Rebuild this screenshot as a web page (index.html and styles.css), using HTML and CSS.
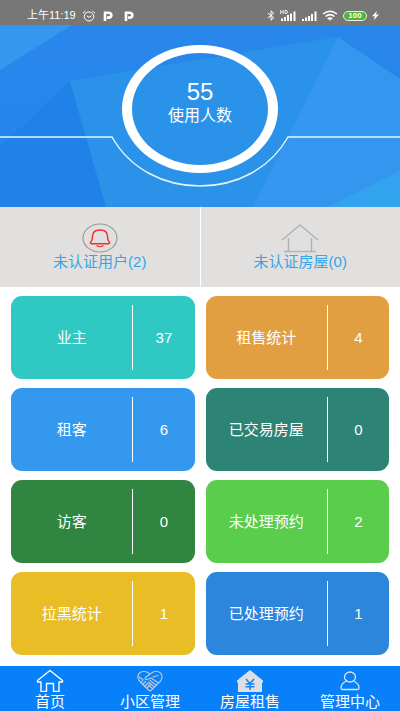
FILE: index.html
```html
<!DOCTYPE html>
<html lang="zh-CN">
<head>
<meta charset="utf-8">
<meta name="viewport" content="width=device-width, initial-scale=1">
<title>小区管理</title>
<link rel="stylesheet" href="styles.css">
</head>
<body>
<header class="status">
  <div class="status-group">
    <span class="time">上午11:19</span>
    <svg class="alarm" width="14" height="12" viewBox="0 0 14 12" fill="none" stroke="#fff"><ellipse cx="7" cy="6.5" rx="4.8" ry="4.5"/><path d="M1 3.2 3.5 1M13 3.2 10.5 1M4.8 5.8 7 7.4l2.6-1.6"/></svg>
    <svg class="p-icon" width="10" height="10" viewBox="0 0 10 10" fill="none" stroke="#fff" stroke-width="2.6"><path d="M2 10V1.800H5.500Q8.400 1.800 8.400 4.200 8.400 6.600 5.500 6.600H4"/></svg>
    <svg class="p-icon" width="10" height="10" viewBox="0 0 10 10" fill="none" stroke="#fff" stroke-width="2.6"><path d="M2 10V1.800H5.500Q8.400 1.800 8.400 4.200 8.400 6.600 5.500 6.600H4"/></svg>
  </div>
  <div class="status-group status-right">
    <svg width="8" height="11" viewBox="0 0 8 11" fill="none" stroke="#fff"><path d="M.8 3 6.8 7.8 4 10.2V.8L6.8 3.2.8 8"/></svg>
    <svg width="16" height="11" viewBox="0 0 16 11" fill="none" stroke="#fff"><path d="M.7 0v4M3.2 0v4M.7 2h2.5M5 .5v3M5 .5h1Q7.5.5 7.500 2T6 3.500H5" stroke-width=".8"/><path d="M2 11V8.500M5 11V7M8 11V5M11 11V3.500M14.500 11V1.500" stroke-width="2"/></svg>
    <svg width="16" height="11" viewBox="0 0 16 11" fill="none" stroke="#fff"><path d="M2 11V9M5 11V7.500M8 11V6M11 11V4M14.500 11V1.500" stroke-width="2"/></svg>
    <svg class="wifi" width="16" height="11" viewBox="0 0 16 11" fill="none" stroke="#fff" stroke-width="1.5"><path d="M1 4Q8-1.500 15 4M3.500 6.500Q8 2.800 12.500 6.500M5.700 8.800Q8 7 10.300 8.800"/><path d="m6.500 9.300 1.500 1.500 1.500-1.500z" fill="#fff" stroke="none"/></svg>
    <span class="battery">100</span>
    <svg width="7" height="9" viewBox="0 0 7 9" fill="#fff"><path d="M4.800 0 0 5.200h2.800L1.800 9 7 3.600H4z"/></svg>
  </div>
</header>

<section class="hero">
  <svg class="hero-art" viewBox="0 0 400 182" preserveAspectRatio="none">
    <defs>
      <linearGradient id="base" x2="0" y2="1"><stop offset="0" stop-color="#2987ec"/><stop offset="1" stop-color="#2384ea"/></linearGradient>
    </defs>
    <rect width="400" height="182" fill="url(#base)"/>
    <path d="M0 0h72L0 45z" fill="#3398ee"/>
    <path d="M70 56 0 122v60h106z" fill="#2082e8"/>
    <path d="M70 56 338 12 253 182H106z" fill="#2b92e9"/>
    <path d="m338 12 62 42v128H253z" fill="#3496ee"/>
    <path d="m328 182 72-36v36z" fill="#32a4ef"/>
    <path d="M0 112H112C130 144 164 161 200 161S270 144 288 112H400" fill="none" stroke="#e2f5fb" stroke-width="1.500"/>
    <path fill="#fff" fill-rule="evenodd" d="M122 84a78 64 0 1 0 156 0a78 64 0 1 0-156 0zM132 84a68 56 0 1 1 136 0a68 56 0 1 1-136 0z"/>
  </svg>
  <div class="hero-text">
    <strong class="hero-count">55</strong>
    <span class="hero-label">使用人数</span>
  </div>
</section>

<section class="pending">
  <a class="pending-item" href="#users">
    <svg width="36" height="30" viewBox="0 0 36 30" fill="none"><ellipse cx="18" cy="15" rx="17" ry="14" stroke="#999" stroke-width="1.200"/><path d="M8.500 19.500Q10.500 17.500 10.500 13.500C10.500 9 13 7 18 7s7.500 2 7.500 6.500q0 4 2 6 .5 1.200-1.500 1.200H10q-2 0-1.500-1.200z" stroke="#f02f2f" stroke-width="1.500"/><path d="M14.500 22.500q3.500 2.500 7 0" stroke="#f02f2f" stroke-width="1.200"/></svg>
    <span>未认证用户(2)</span>
  </a>
  <a class="pending-item" href="#houses">
    <svg width="38" height="30" viewBox="0 0 38 30" fill="none" stroke="#b3b3b3" stroke-width="1.500"><path d="M1 17 19 2l18 15M7.500 15v13M30.500 15v13M3 28.500h32"/></svg>
    <span>未认证房屋(0)</span>
  </a>
</section>

<main class="cards">
  <a class="card owner" href="#owner"><span class="name">业主</span><span class="value">37</span></a>
  <a class="card rental" href="#rental"><span class="name">租售统计</span><span class="value">4</span></a>
  <a class="card tenant" href="#tenant"><span class="name">租客</span><span class="value">6</span></a>
  <a class="card traded" href="#traded"><span class="name">已交易房屋</span><span class="value">0</span></a>
  <a class="card visitor" href="#visitor"><span class="name">访客</span><span class="value">0</span></a>
  <a class="card waiting" href="#waiting"><span class="name">未处理预约</span><span class="value">2</span></a>
  <a class="card blocked" href="#blocked"><span class="name">拉黑统计</span><span class="value">1</span></a>
  <a class="card handled" href="#handled"><span class="name">已处理预约</span><span class="value">1</span></a>
</main>

<nav class="tabs">
  <a class="tab" href="#home">
    <svg width="28" height="24" viewBox="0 0 28 24" fill="none" stroke="#fff" stroke-width="1.400" stroke-linejoin="round"><path d="M1.500 12.500 14 2.500l12.500 10v1.500h-3.500v9.500h-5.500v-8h-7v8H5V14H1.500z"/></svg>
    <span>首页</span>
  </a>
  <a class="tab" href="#community">
    <svg width="28" height="24" viewBox="0 -1 28 24" fill="none" stroke="#b9c6d6" stroke-width="1.200" stroke-linejoin="round" stroke-linecap="round"><path d="M5 13.500C1.500 10.500 1 6.500 3.500 4 6.500 1.500 10.500 2 14 5c3.500-3 7.500-3.500 10.500-1 2.500 2.500 2 6.500-1.500 9.500l-7.500 7.500q-1.500 1.500-3 0z"/><path d="M14 5 9.500 8.500q-1 2 1 2.200L15 9l7.500 5M17 8l5-1.500M3 8l4 2.500M7 11l-2 2.500M9.500 12.500l-3 3M12 14l-3.500 3.500M14.500 15.500 11 19M14 11.500l6 4.500M13 13.500l5.500 4.500M12.500 16l4 3.500"/></svg>
    <span>小区管理</span>
  </a>
  <a class="tab" href="#housing">
    <svg width="28" height="24" viewBox="0 -1 28 24"><path d="M14 1 27 11.500v2h-1V23H2v-9.500H1v-2z" fill="#dcdfe3"/><path d="m10 10 4 4.500 4-4.500M9.500 15h9M9.500 17.800h9M14 14.500V21" fill="none" stroke="#1683ef" stroke-width="1.500"/></svg>
    <span>房屋租售</span>
  </a>
  <a class="tab" href="#admin">
    <svg width="28" height="24" viewBox="0 -1 28 24" fill="none" stroke="#dce3ea" stroke-width="1.300"><ellipse cx="14" cy="8" rx="5.500" ry="5"/><path d="M10.500 12Q5 14.500 5 19q0 1.500 1.500 1.500h15q1.500 0 1.500-1.500 0-4.500-5.500-7"/></svg>
    <span>管理中心</span>
  </a>
</nav>
</body>
</html>
```

FILE: styles.css
```css
* {
  box-sizing: border-box;
}

body {
  margin: 0;
  min-height: 100vh;
  display: flex;
  flex-direction: column;
  background: #fff;
  color: #fff;
  font-family: "Liberation Sans", "Noto Sans CJK SC", sans-serif;
  font-size: 15px;
  line-height: 20px;
}

a {
  color: inherit;
  text-decoration: none;
}

svg {
  display: block;
  flex: none;
}

.status {
  display: flex;
  justify-content: space-between;
  align-items: flex-end;
  height: 25px;
  padding: 0 21px 2px 27px;
  background: #777;
}

.status-group {
  display: flex;
  align-items: center;
  height: 15px;
}

.time {
  font-size: 11px;
  line-height: 15px;
}

.alarm {
  margin-left: 6px;
}

.p-icon {
  margin-left: 7px;
}

.p-icon + .p-icon {
  margin-left: 11px;
}

.status-right {
  gap: 5px;
}

.battery {
  width: 24px;
  height: 10px;
  border: 1px solid #e8f2e4;
  border-radius: 5px;
  background: #55b335;
  font-size: 8px;
  font-weight: 700;
  line-height: 8px;
  text-align: center;
}

.hero {
  display: grid;
  height: 182px;
}

.hero-art,
.hero-text {
  grid-area: 1 / 1;
}

.hero-art {
  width: 100%;
  height: 182px;
}

.hero-text {
  z-index: 1;
  display: flex;
  flex-direction: column;
  align-items: center;
  padding-top: 54px;
}

.hero-count {
  font-size: 24px;
  font-weight: 400;
  line-height: 26px;
}

.hero-label {
  font-size: 16px;
  line-height: 22px;
}

.pending {
  display: grid;
  grid-template-columns: 1fr 1fr;
  gap: 1px;
  height: 80px;
}

.pending-item {
  display: flex;
  flex-direction: column;
  align-items: center;
  padding-top: 16px;
  background: #e2e0df;
  color: #35a5e8;
}

.pending-item span {
  line-height: 18px;
}

.cards {
  flex: 1;
  display: grid;
  grid-template-columns: 1fr 1fr;
  grid-auto-rows: 1fr;
  gap: 9px 11px;
  padding: 9px 11px 11px;
}

.card {
  display: grid;
  grid-template-columns: 2fr 1fr;
  padding: 9px 0;
  border-radius: 11px;
}

.name,
.value {
  display: flex;
  align-items: center;
  justify-content: center;
}

.name {
  border-right: 1px solid #fff;
}

.owner { background: #30c8c3; }
.rental { background: #e29f42; }
.tenant { background: #3398ee; }
.traded { background: #2d8475; }
.visitor { background: #308540; }
.waiting { background: #5acd4c; }
.blocked { background: #e8bd25; }
.handled { background: #2c86dc; }

.tabs {
  display: grid;
  grid-template-columns: repeat(4, 1fr);
  height: 45px;
  background: #0780fa;
}

.tab {
  display: flex;
  flex-direction: column;
  align-items: center;
  padding-top: 2px;
}

.tab span {
  line-height: 19px;
}
```
